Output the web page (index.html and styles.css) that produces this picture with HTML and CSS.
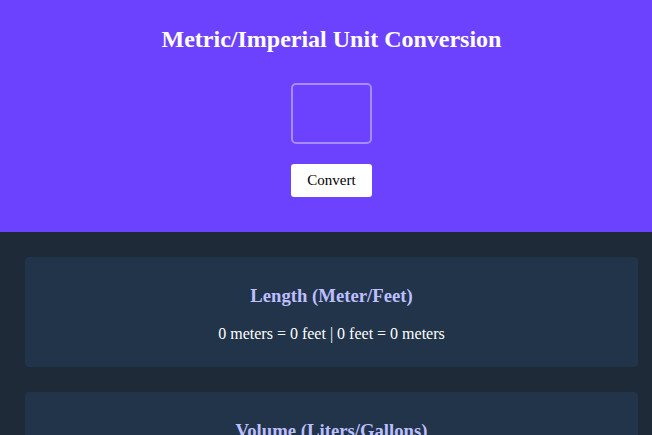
FILE: index.html
```html
<!DOCTYPE html>
<html>
<head>
<meta charset="utf-8">
<link rel="stylesheet" href="styles.css">
</head>
<body>
<header class="hero">
  <h1 class="title">Metric/Imperial Unit Conversion</h1>
  <input class="value-input" type="text">
  <button class="convert-btn">Convert</button>
</header>
<main class="cards">
  <section class="card">
    <h2 class="card-title">Length (Meter/Feet)</h2>
    <p class="card-text">0 meters = 0 feet | 0 feet = 0 meters</p>
  </section>
  <section class="card">
    <h2 class="card-title">Volume (Liters/Gallons)</h2>
    <p class="card-text">0 liters = 0 gallons | 0 gallons = 0 liters</p>
  </section>
  <section class="card">
    <h2 class="card-title">Mass (Kilograms/Pounds)</h2>
    <p class="card-text">0 kilos = 0 pounds | 0 pounds = 0 kilos</p>
  </section>
</main>
</body>
</html>
```
FILE: styles.css
```css
html {
  scrollbar-width: none;
}
body {
  margin: 0;
  min-width: 663px;
  background: #1e2a37;
  font-family: "Liberation Serif", serif;
}
.hero {
  background: #6c42ff;
  display: flex;
  flex-direction: column;
  align-items: center;
  padding: 26px 0 35px;
}
.title {
  margin: 0 0 30px;
  font-size: 24px;
  color: #ffffff;
}
.value-input {
  box-sizing: border-box;
  width: 81px;
  height: 61px;
  background: transparent;
  border: 2px solid rgba(255, 255, 255, 0.4);
  border-radius: 5px;
  margin: 0 0 20px;
}
.convert-btn {
  width: 81px;
  height: 33px;
  background: #ffffff;
  border: none;
  border-radius: 3px;
  font-family: "Liberation Serif", serif;
  font-size: 15px;
  color: #000;
}
.cards {
  display: flex;
  flex-direction: column;
  gap: 25px;
  padding: 25px;
}
.card {
  background: #213449;
  border-radius: 4px;
  padding: 28px 20px 24px;
  text-align: center;
}
.card-title {
  margin: 0 0 18px;
  font-size: 18.72px;
  color: #bdbfff;
}
.card-text {
  margin: 0;
  font-size: 16px;
  color: #ffffff;
}
```
